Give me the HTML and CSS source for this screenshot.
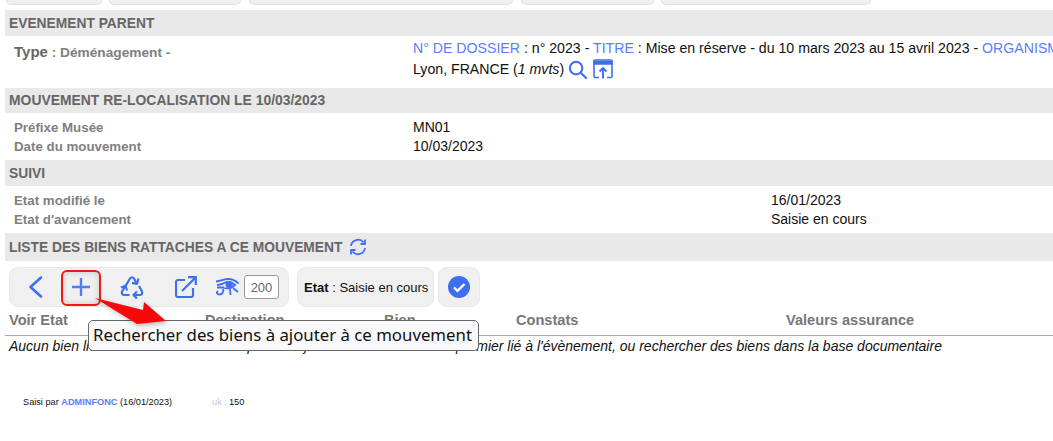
FILE: index.html
```html
<!DOCTYPE html>
<html lang="fr">
<head>
    <meta charset="UTF-8">
    <title>Mouvement - Re-localisation</title>
    <link rel="stylesheet" href="styles.css">
</head>
<body>
    <div class="tabs">
        <div class="tab tab-1"></div>
        <div class="tab tab-2"></div>
        <div class="tab tab-3"></div>
        <div class="tab tab-4"></div>
        <div class="tab tab-5"></div>
    </div>

    <div class="container">
        <h2 class="band">EVENEMENT PARENT</h2>
        <div class="parent">
            <div class="parent-type"><b>Type</b> : Déménagement -</div>
            <div class="parent-info">
                <span class="key">N° DE DOSSIER</span> : n° 2023 - <span class="key">TITRE</span> : Mise en réserve - du 10 mars 2023 au 15 avril 2023 - <span class="key">ORGANISME</span> : Musée<br>
                Lyon, FRANCE (<i>1 mvts</i>)
                <svg class="icon-search" width="19" height="19" viewBox="0 0 20 20" fill="none" stroke="#3f6ef3" stroke-width="2.2">
                    <circle cx="8.5" cy="8.5" r="6.6"/>
                    <path d="M13.4 13.4L19 19" stroke-linecap="round"/>
                </svg>
                <svg class="icon-open" width="20" height="20" viewBox="0 0 20 20" fill="none" stroke="#3f6ef3" stroke-width="1.6">
                    <path d="M6 18.5H2a1 1 0 0 1-1-1V2a1 1 0 0 1 1-1h16a1 1 0 0 1 1 1v15.500a1 1 0 0 1-1 1h-4"/>
                    <path d="M1 2.500h18V5H1z" fill="#3f6ef3"/>
                    <path d="M10 19.500V9M6.500 12.500L10 9l3.500 3.500" stroke-width="1.900"/>
                </svg>
            </div>
        </div>

        <h2 class="band band-short">MOUVEMENT RE-LOCALISATION LE 10/03/2023</h2>
        <div class="rows">
            <div class="row"><span class="label">Préfixe Musée</span><span>MN01</span></div>
            <div class="row"><span class="label">Date du mouvement</span><span>10/03/2023</span></div>
        </div>

        <h2 class="band">SUIVI</h2>
        <div class="rows rows-wide">
            <div class="row"><span class="label">Etat modifié le</span><span>16/01/2023</span></div>
            <div class="row"><span class="label">Etat d'avancement</span><span>Saisie en cours</span></div>
        </div>

        <h2 class="band band-tall">
            LISTE DES BIENS RATTACHES A CE MOUVEMENT
            <svg class="icon-sync" width="18" height="18" viewBox="0 0 18 18" fill="none" stroke="#3f6ef3" stroke-width="1.800">
                <path d="M2 8A7 7 0 0 1 14.500 4.500"/>
                <path d="M16 1.500V6h-4.500" stroke-linejoin="round"/>
                <path d="M16 10A7 7 0 0 1 3.500 13.500"/>
                <path d="M2 16.500V12h4.500" stroke-linejoin="round"/>
            </svg>
        </h2>

        <div class="toolbar">
            <div class="tool-group tool-main">
                <svg class="tool-back" width="15" height="22" viewBox="0 0 15 22" fill="none" stroke="#3f6ef3" stroke-width="2.600">
                    <path d="M13 1.500L2.500 11 13 20.500" stroke-linecap="round" stroke-linejoin="round"/>
                </svg>
                <svg class="tool-add" width="18" height="18" viewBox="0 0 18 18" fill="none" stroke="#4f7ff5" stroke-width="2.400">
                    <path d="M9 0v18M0 9h18"/>
                </svg>
                <svg class="tool-recycle" width="24" height="24" viewBox="0 0 24 24" fill="none" stroke="#3f6ef3" stroke-width="2.200" stroke-linejoin="round">
                    <path d="M5.500 11L10 3.500Q12 1 14 3.500L16.500 8"/>
                    <path d="M18.500 3.500L17 8.800 12 7.800"/>
                    <path d="M19 11l3 5.500Q23 20 19.500 20H14.500"/>
                    <path d="M17 16.500L13.500 20 17 23.500"/>
                    <path d="M9.500 20H4.500Q1 20 2 16.500L5 11.500"/>
                    <path d="M1 12.500L5.500 10.800 7 15.500"/>
                </svg>
                <svg class="tool-link" width="22" height="22" viewBox="0 0 22 22" fill="none" stroke="#3f6ef3" stroke-width="2.200">
                    <path d="M10 4H3a2 2 0 0 0-2 2v13a2 2 0 0 0 2 2h13a2 2 0 0 0 2-2v-7"/>
                    <path d="M7 15L20 2M13 1.200h7.800V9"/>
                </svg>
                <svg class="tool-eye" width="23" height="18" viewBox="0 0 23 18" fill="none" stroke="#3f6ef3" stroke-width="1.800">
                    <path d="M0 3.500C5 3 8 1 12 1c4 0 8 2 10.500 4.500"/>
                    <path d="M1 7c3-.5 5-.5 7-2 3.500-1.500 8-1 11 2-3 3-7 4-11 3"/>
                    <circle cx="13" cy="6.500" r="2.600" fill="#3f6ef3"/>
                    <path d="M1 9.500h7M7 11c1 3-1 5.500-3.500 5.500S0 14.500 2 13"/>
                    <path d="M14 11l.5 6M17 10l5 4"/>
                </svg>
                <input class="tool-count" type="text" value="200">
            </div>
            <div class="tool-group tool-state"><b>Etat</b>&nbsp;: Saisie en cours</div>
            <div class="tool-group tool-check">
                <svg width="22" height="22" viewBox="0 0 22 22">
                    <circle cx="11" cy="11" r="11" fill="#3f6ef3"/>
                    <path d="M6 11.500l3.500 3.300L16.500 8" fill="none" stroke="#fff" stroke-width="2.400"/>
                </svg>
            </div>
        </div>

        <div class="list-head">
            <span>Voir Etat</span>
            <span>Destination</span>
            <span>Bien</span>
            <span>Constats</span>
            <span>Valeurs assurance</span>
        </div>
        <p class="list-empty">Aucun bien lié à ce mouvement. Vous pouvez ajouter des biens dans le premier lié à l'évènement, ou rechercher des biens dans la base documentaire</p>
    </div>

    <div class="footer">
        <span>Saisi par <span class="author">ADMINFONC</span> (16/01/2023)</span>
        <span class="uk"><span class="uk-key">uk :</span>150</span>
    </div>

    <!-- annotations posees sur la capture -->
    <div class="callout-box"></div>
    <div class="tooltip">Rechercher des biens à ajouter à ce mouvement</div>
    <svg class="callout-arrow" width="80" height="36" viewBox="0 0 80 36">
        <path d="M1 2L49 14 50 6 72 25 43 28Z" fill="#f80808"/>
    </svg>
</body>
</html>
```

FILE: styles.css
```css
* {
    margin: 0;
    padding: 0;
    box-sizing: border-box;
}

body {
    position: relative;
    height: 441px;
    overflow: hidden;
    background: white;
    color: #111;
    font-family: "Liberation Sans", Arial, sans-serif;
    font-size: 14px;
}

.tabs {
    display: flex;
    height: 10px;
    padding-left: 6px;
}

.tab {
    height: 5px;
    background: #f0f0f0;
    border: 1px solid #e2e2e2;
    border-top: none;
    border-radius: 0 0 9px 9px;
}

.tab-1 { width: 96px; margin-right: 7px; }
.tab-2 { width: 132px; margin-right: 8px; }
.tab-3 { width: 264px; margin-right: 8px; }
.tab-4 { width: 133px; margin-right: 7px; }
.tab-5 { width: 210px; }

.container {
    margin-left: 5px;
}

.band {
    display: flex;
    align-items: center;
    height: 26px;
    padding-left: 4px;
    background: #e9e9e9;
    color: #666;
    font-size: 13.800px;
    font-weight: bold;
}

.band-short { height: 25px; padding-bottom: 1px; font-size: 13.900px; }
.band-tall { height: 28px; }

.parent {
    display: flex;
    height: 52px;
    padding-top: 2px;
    overflow: hidden;
}

.parent-type {
    width: 408px;
    flex-shrink: 0;
    padding: 5px 0 0 9px;
    color: #808080;
    font-size: 13.700px;
    font-weight: bold;
}

.parent-type b {
    color: #666;
    font-size: 15px;
}

.parent-info {
    font-size: 14.150px;
    line-height: 21px;
    white-space: nowrap;
}

.key {
    color: #5b7cff;
}

.icon-search {
    vertical-align: -5px;
}

.icon-open {
    vertical-align: -5px;
    margin-left: 2px;
}

.rows {
    display: flex;
    flex-direction: column;
    height: 47px;
    padding-top: 5px;
}

.rows-wide .row {
    grid-template-columns: 766px 1fr;
}

.row {
    display: grid;
    grid-template-columns: 408px 1fr;
    height: 19px;
    line-height: 19px;
    padding-left: 9px;
}

.rows .row > span:last-child {
    margin-left: -9px;
}

.label {
    color: #808080;
    font-size: 13.300px;
    font-weight: bold;
}

.icon-sync {
    margin-left: 7px;
}

.toolbar {
    display: flex;
    gap: 4px;
    height: 46px;
    padding: 6px 0 0 4px;
}

.tool-group {
    display: flex;
    align-items: center;
    height: 40px;
    background: #f0f0f0;
    border: 1px solid #e8e8e8;
    border-radius: 9px;
}

.tool-main {
    width: 280px;
    margin-right: 4px;
    padding-left: 18px;
}

.tool-add { margin-left: 29px; }
.tool-recycle { margin-left: 30px; }
.tool-link { margin-left: 31px; }
.tool-eye { margin-left: 19px; }

.tool-count {
    width: 35px;
    height: 24px;
    margin-left: 5px;
    background: white;
    border: 1px solid #999;
    border-radius: 3px;
    color: #666;
    font-family: inherit;
    font-size: 13px;
    text-align: center;
}

.tool-state {
    width: 137px;
    padding-left: 6px;
    font-size: 13px;
    white-space: nowrap;
}

.tool-check {
    justify-content: center;
    width: 42px;
}

.list-head {
    display: grid;
    grid-template-columns: 196px 179px 132px 270px 1fr;
    height: 29px;
    padding: 5px 0 0 4px;
    border-bottom: 1px solid #aaa;
    color: #777;
    font-size: 14.600px;
    font-weight: bold;
    line-height: 16px;
}

.list-empty {
    padding: 2px 0 0 4px;
    font-style: italic;
    line-height: 16px;
}

.footer {
    display: flex;
    margin-top: 43px;
    padding-left: 23px;
    font-size: 9.200px;
}

.author {
    color: #5b7cff;
    font-weight: bold;
}

.uk {
    margin-left: 40px;
}

.uk-key {
    color: #c8c8d0;
    margin-right: 2px;
}

.callout-box {
    position: absolute;
    left: 61px;
    top: 270px;
    width: 40px;
    height: 36px;
    border: 2px solid #f01818;
    border-radius: 6px;
    box-shadow: inset 0 0 6px rgba(0, 0, 0, 0.18);
}

.callout-arrow {
    position: absolute;
    left: 94px;
    top: 296px;
    filter: drop-shadow(1px 2px 2px rgba(0, 0, 0, 0.25));
}

.tooltip {
    position: absolute;
    left: 88px;
    top: 320px;
    width: 391px;
    height: 31px;
    padding-left: 4px;
    background: #f9f9fc;
    border: 1px solid #666;
    border-radius: 5px;
    color: #111;
    font-family: "Noto Sans", sans-serif;
    font-size: 16.800px;
    line-height: 28px;
    white-space: nowrap;
}
```
